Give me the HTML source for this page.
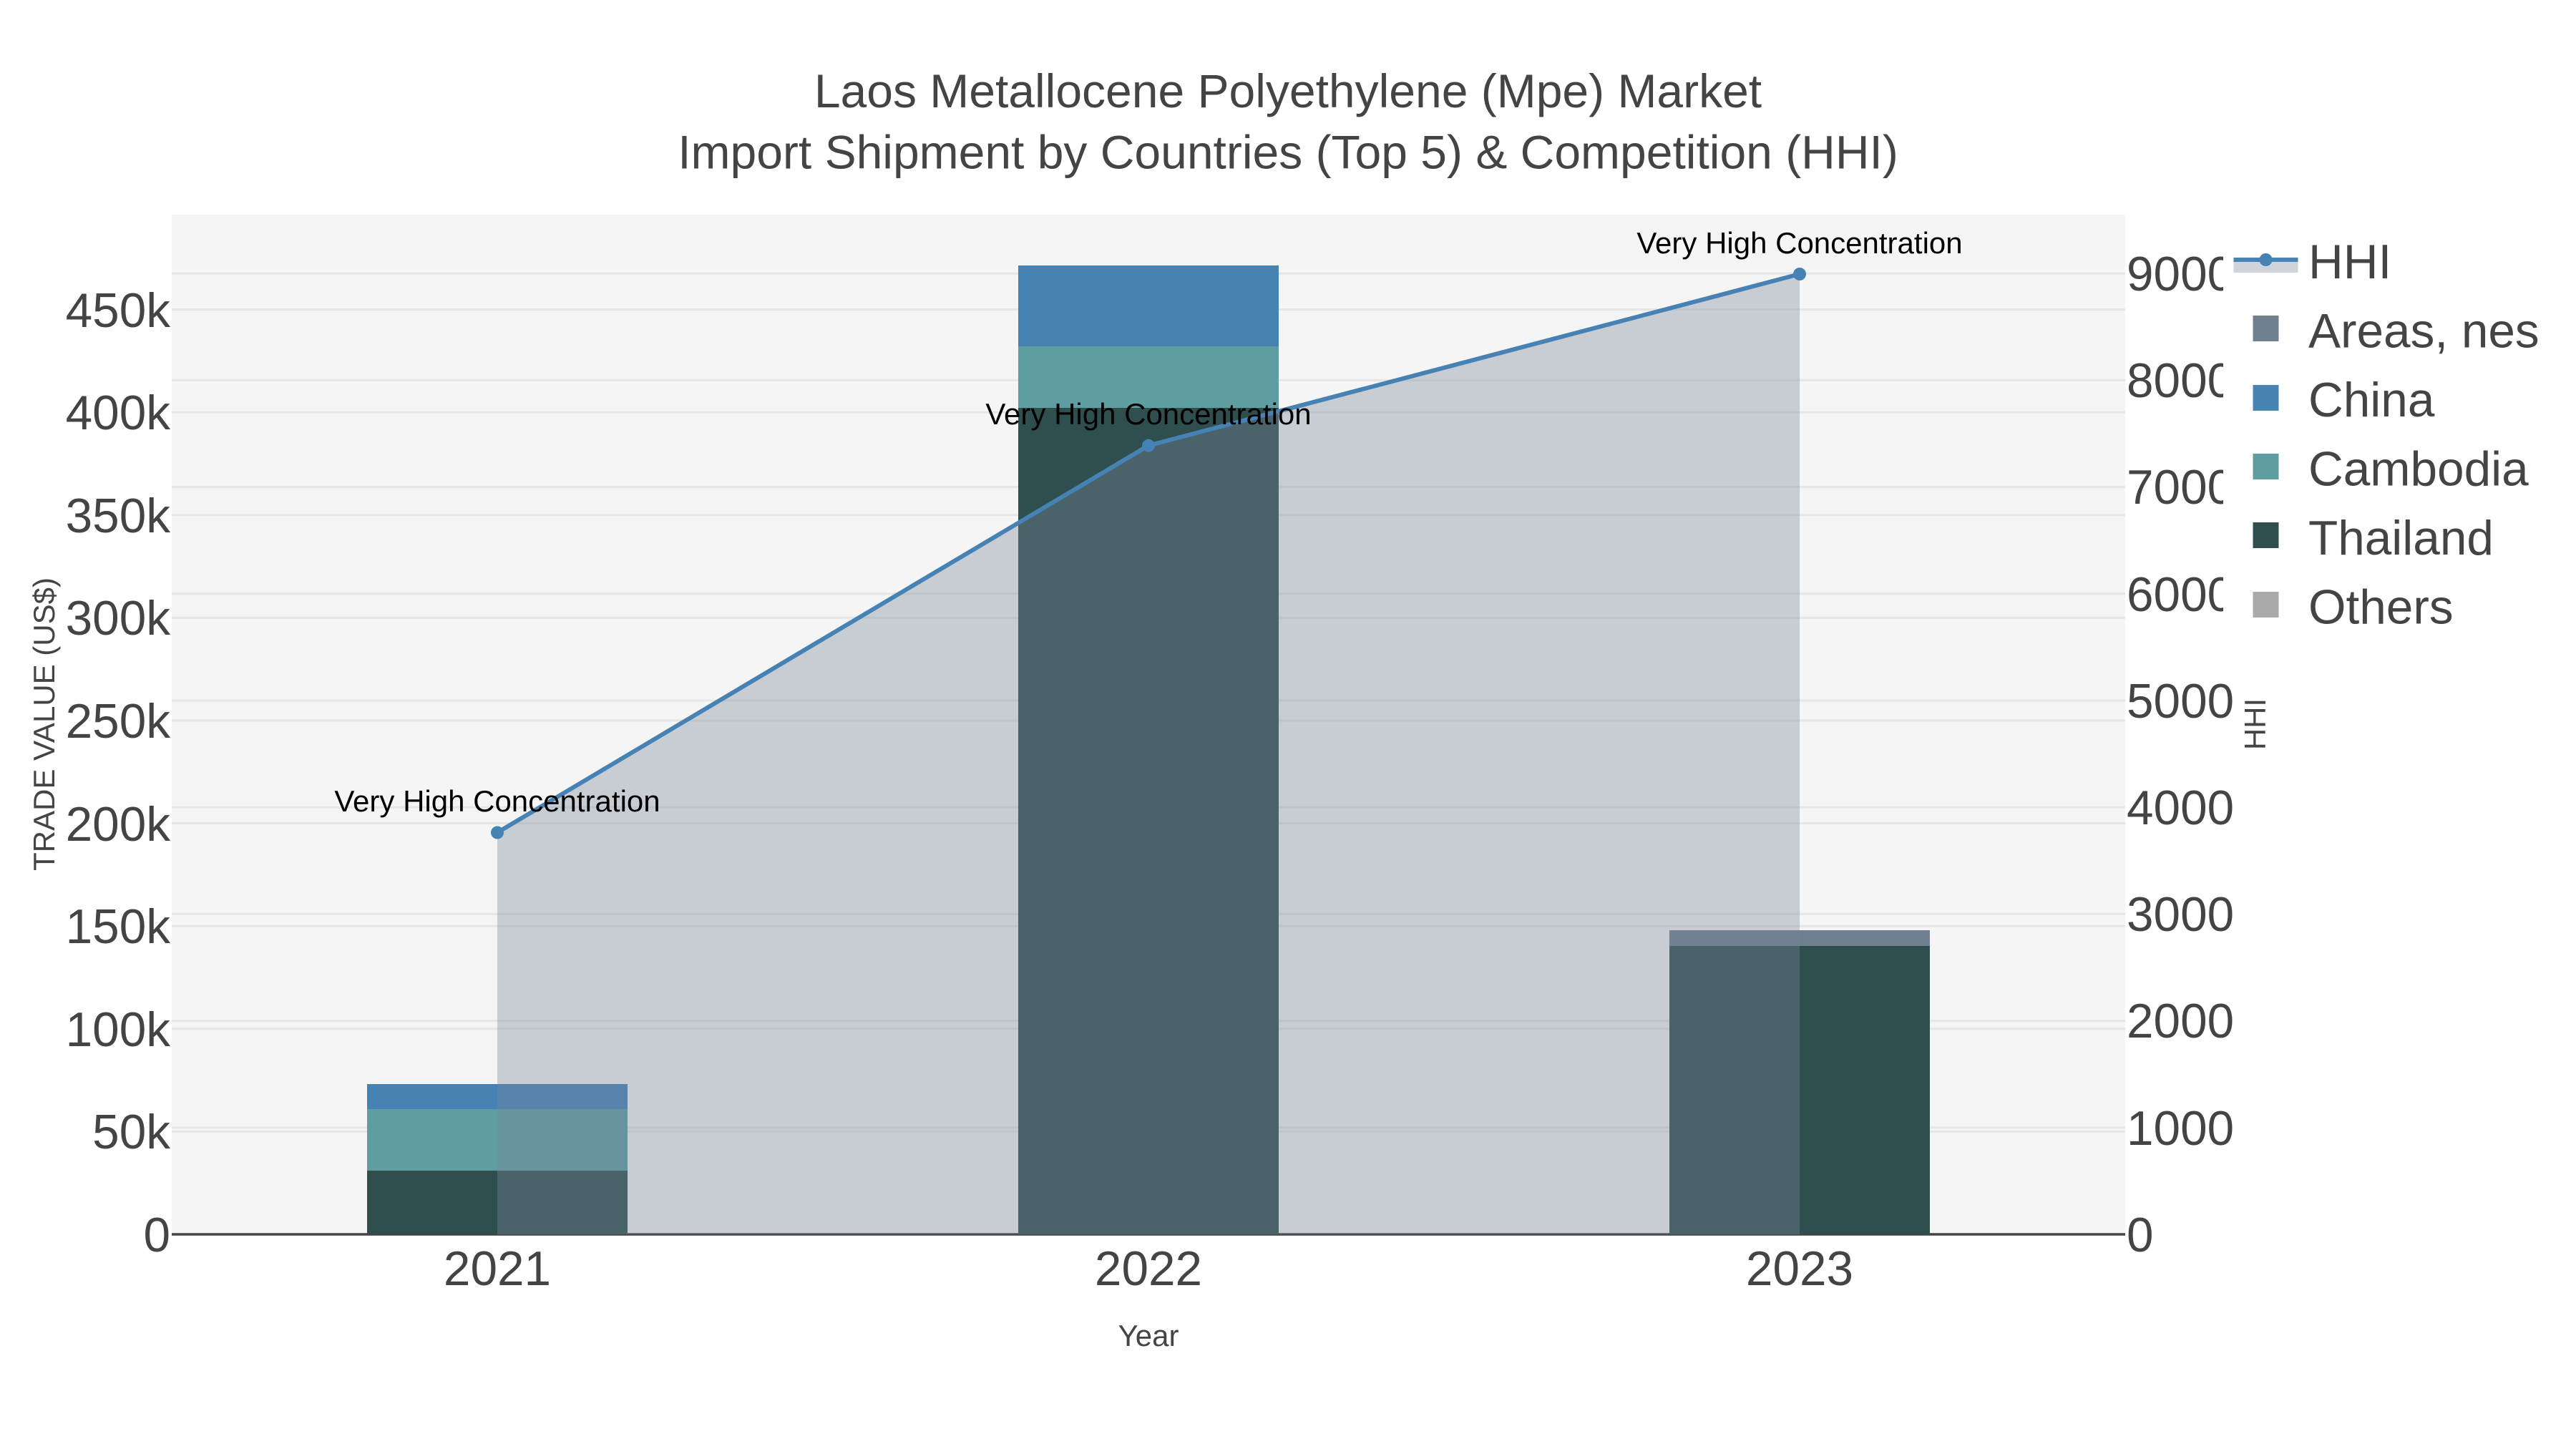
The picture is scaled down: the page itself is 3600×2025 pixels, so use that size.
<!DOCTYPE html>
<html>
<head>
<meta charset="utf-8">
<style>
html,body{margin:0;padding:0;background:#fff;width:3600px;height:2025px;overflow:hidden}
svg{display:block}
text{font-family:"Liberation Sans",Arial,sans-serif;fill:#444}
.t{font-size:67.5px}
.a{font-size:42px;fill:#000;text-anchor:middle}
.g{stroke:#e6e6e6;stroke-width:3;fill:none}
</style>
</head>
<body>
<svg width="3600" height="2025" viewBox="0 0 3600 2025" xmlns="http://www.w3.org/2000/svg">
<rect x="0" y="0" width="3600" height="2025" fill="#fff"/>
<rect x="240" y="300" width="2730" height="1425" fill="#f5f5f5"/>
<!-- gridlines -->
<g class="g">
<path d="M240 432.6H2970M240 576.2H2970M240 719.8H2970M240 863.4H2970M240 1007H2970M240 1150.6H2970M240 1294.2H2970M240 1437.8H2970M240 1581.4H2970"/>
<path d="M240 382.2H2970M240 531.4H2970M240 680.6H2970M240 829.8H2970M240 979H2970M240 1128.2H2970M240 1277.4H2970M240 1426.6H2970M240 1575.8H2970"/>
</g>
<!-- axis -->
<path d="M240 1725H2970" stroke="#444" stroke-width="3.5" fill="none"/>
<!-- bars -->
<rect x="513" y="1636" width="364" height="89" fill="#2f4f4f"/>
<rect x="513" y="1550" width="364" height="86" fill="#5f9ea0"/>
<rect x="513" y="1515" width="364" height="35" fill="#4682b4"/>
<rect x="1423" y="570" width="364" height="1155" fill="#2f4f4f"/>
<rect x="1423" y="484" width="364" height="86" fill="#5f9ea0"/>
<rect x="1423" y="371" width="364" height="113" fill="#4682b4"/>
<rect x="2333" y="1322" width="364" height="403" fill="#2f4f4f"/>
<rect x="2333" y="1300" width="364" height="22" fill="#708090"/>
<!-- area -->
<path d="M695 1163.5L1605 622.7L2515 383V1725H695Z" style="fill:rgb(122,133,152);fill-opacity:.36"/>
<!-- line -->
<path d="M695 1163.5L1605 622.7L2515 383" stroke="#4682b4" stroke-width="6" fill="none"/>
<circle cx="695" cy="1163.5" r="9" fill="#4682b4"/>
<circle cx="1605" cy="622.7" r="9" fill="#4682b4"/>
<circle cx="2515" cy="383" r="9" fill="#4682b4"/>
<!-- annotations -->
<text class="a" x="695" y="1134">Very High Concentration</text>
<text class="a" x="1605" y="593">Very High Concentration</text>
<text class="a" x="2515" y="354">Very High Concentration</text>
<!-- title -->
<text x="1800" y="150" text-anchor="middle" style="font-size:66px">Laos Metallocene Polyethylene (Mpe) Market</text>
<text x="1800" y="235.7" text-anchor="middle" style="font-size:66px">Import Shipment by Countries (Top 5) &amp; Competition (HHI)</text>
<!-- left ticks -->
<g class="t" text-anchor="end">
<text x="238" y="457">450k</text>
<text x="238" y="600">400k</text>
<text x="238" y="744">350k</text>
<text x="238" y="887">300k</text>
<text x="238" y="1031">250k</text>
<text x="238" y="1175">200k</text>
<text x="238" y="1318">150k</text>
<text x="238" y="1462">100k</text>
<text x="238" y="1605">50k</text>
<text x="238" y="1749">0</text>
</g>
<!-- right ticks -->
<g class="t">
<text x="2972" y="406">9000</text>
<text x="2972" y="555">8000</text>
<text x="2972" y="704">7000</text>
<text x="2972" y="854">6000</text>
<text x="2972" y="1003">5000</text>
<text x="2972" y="1152">4000</text>
<text x="2972" y="1301">3000</text>
<text x="2972" y="1450">2000</text>
<text x="2972" y="1600">1000</text>
<text x="2972" y="1749">0</text>
</g>
<!-- x ticks -->
<g class="t" text-anchor="middle">
<text x="695" y="1796">2021</text>
<text x="1605" y="1796">2022</text>
<text x="2515" y="1796">2023</text>
</g>
<!-- axis titles -->
<text x="1605" y="1881" text-anchor="middle" style="font-size:42px">Year</text>
<text transform="translate(76 1012) rotate(-90)" text-anchor="middle" style="font-size:42px">TRADE VALUE (US$)</text>
<text transform="translate(3166 1012) rotate(-90)" text-anchor="middle" style="font-size:42px">HHI</text>
<!-- legend -->
<rect x="3107" y="340" width="493" height="553" fill="#fff"/>
<rect x="3121.5" y="363" width="90" height="18" fill="#cfd4db"/>
<path d="M3121.5 363H3211.5" stroke="#4682b4" stroke-width="6"/>
<circle cx="3166.5" cy="363" r="9" fill="#4682b4"/>
<rect x="3148.5" y="441" width="36" height="36" fill="#708090"/>
<rect x="3148.5" y="538" width="36" height="36" fill="#4682b4"/>
<rect x="3148.5" y="634" width="36" height="36" fill="#5f9ea0"/>
<rect x="3148.5" y="730" width="36" height="36" fill="#2f4f4f"/>
<rect x="3148.5" y="827" width="36" height="36" fill="#aaaaaa"/>
<g class="t">
<text x="3226" y="389">HHI</text>
<text x="3226" y="485.5">Areas, nes</text>
<text x="3226" y="582">China</text>
<text x="3226" y="678.5">Cambodia</text>
<text x="3226" y="775">Thailand</text>
<text x="3226" y="871.5">Others</text>
</g>
</svg>
</body>
</html>
